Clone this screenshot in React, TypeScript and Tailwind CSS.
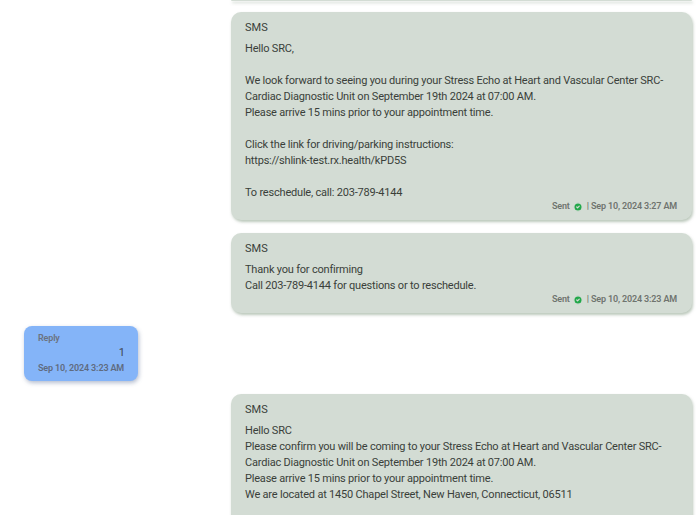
import { CheckCircle2 } from "lucide-react";

const font = "font-['Roboto',sans-serif]";

function SentBubble({ lines, time }: { lines: string[]; time?: string }) {
  return (
    <div className="ml-[231px] mr-2 rounded-[10px] bg-[#d3dcd4] pl-[14px] pr-[15px] pt-2 pb-[7px] shadow-[1px_2px_3px_rgba(120,145,120,0.5)]">
      <div className="text-[11px] leading-4 text-[#3a3f3a]">SMS</div>
      <div className="mt-[5px] whitespace-nowrap text-[11px] leading-4 tracking-[-0.2px] text-[#3a3f3a]">
        {lines.map((line, i) => (
          <div key={i} className="min-h-4">
            {line}
          </div>
        ))}
      </div>
      {time && (
        <div className="flex h-[12px] items-center justify-end gap-[3px] text-[9px] font-semibold tracking-[-0.15px] text-[#6f746f]">
          <span>Sent</span>
          <CheckCircle2 size={10} strokeWidth={3} className="-mt-px text-[#d3dcd4] fill-[#22a84a]" />
          <span className="ml-px">| {time}</span>
        </div>
      )}
    </div>
  );
}

export default function App() {
  return (
    <div className={`h-[515px] w-[700px] overflow-hidden bg-white ${font}`}>
      <div className="flex flex-col">
        <div className="ml-[231px] mr-2 h-[1px] rounded-b-[10px] bg-[#d3dcd4] shadow-[1px_2px_3px_rgba(120,145,120,0.5)]" />
        <div className="mt-[11px]">
          <SentBubble
            time="Sep 10, 2024 3:27 AM"
            lines={[
              "Hello SRC,",
              "",
              "We look forward to seeing you during your Stress Echo at Heart and Vascular Center SRC-",
              "Cardiac Diagnostic Unit on September 19th 2024 at 07:00 AM.",
              "Please arrive 15 mins prior to your appointment time.",
              "",
              "Click the link for driving/parking instructions:",
              "https://shlink-test.rx.health/kPD5S",
              "",
              "To reschedule, call: 203-789-4144",
            ]}
          />
        </div>
        <div className="mt-[13px]">
          <SentBubble
            time="Sep 10, 2024 3:23 AM"
            lines={["Thank you for confirming", "Call 203-789-4144 for questions or to reschedule."]}
          />
        </div>
        <div className="ml-6 mt-[13px] w-[114px] rounded-[8px] bg-[#84b4f8] pl-[14px] pr-[13px] pt-[5px] pb-[6px] shadow-[1px_2px_4px_rgba(90,110,150,0.45)]">
          <div className="text-[9px] font-semibold leading-[14px] tracking-[-0.15px] text-[#6b7280]">Reply</div>
          <div className="text-right text-[11px] leading-[16px] text-[#3f4652]">1</div>
          <div className="whitespace-nowrap text-[9px] font-semibold leading-[14px] tracking-[-0.15px] text-[#5f6b80]">Sep 10, 2024 3:23 AM</div>
        </div>
        <div className="mt-[13px]">
          <SentBubble
            lines={[
              "Hello SRC",
              "Please confirm you will be coming to your Stress Echo at Heart and Vascular Center SRC-",
              "Cardiac Diagnostic Unit on September 19th 2024 at 07:00 AM.",
              "Please arrive 15 mins prior to your appointment time.",
              "We are located at 1450 Chapel Street, New Haven, Connecticut, 06511",
              "",
              "",
            ]}
          />
        </div>
      </div>
    </div>
  );
}
